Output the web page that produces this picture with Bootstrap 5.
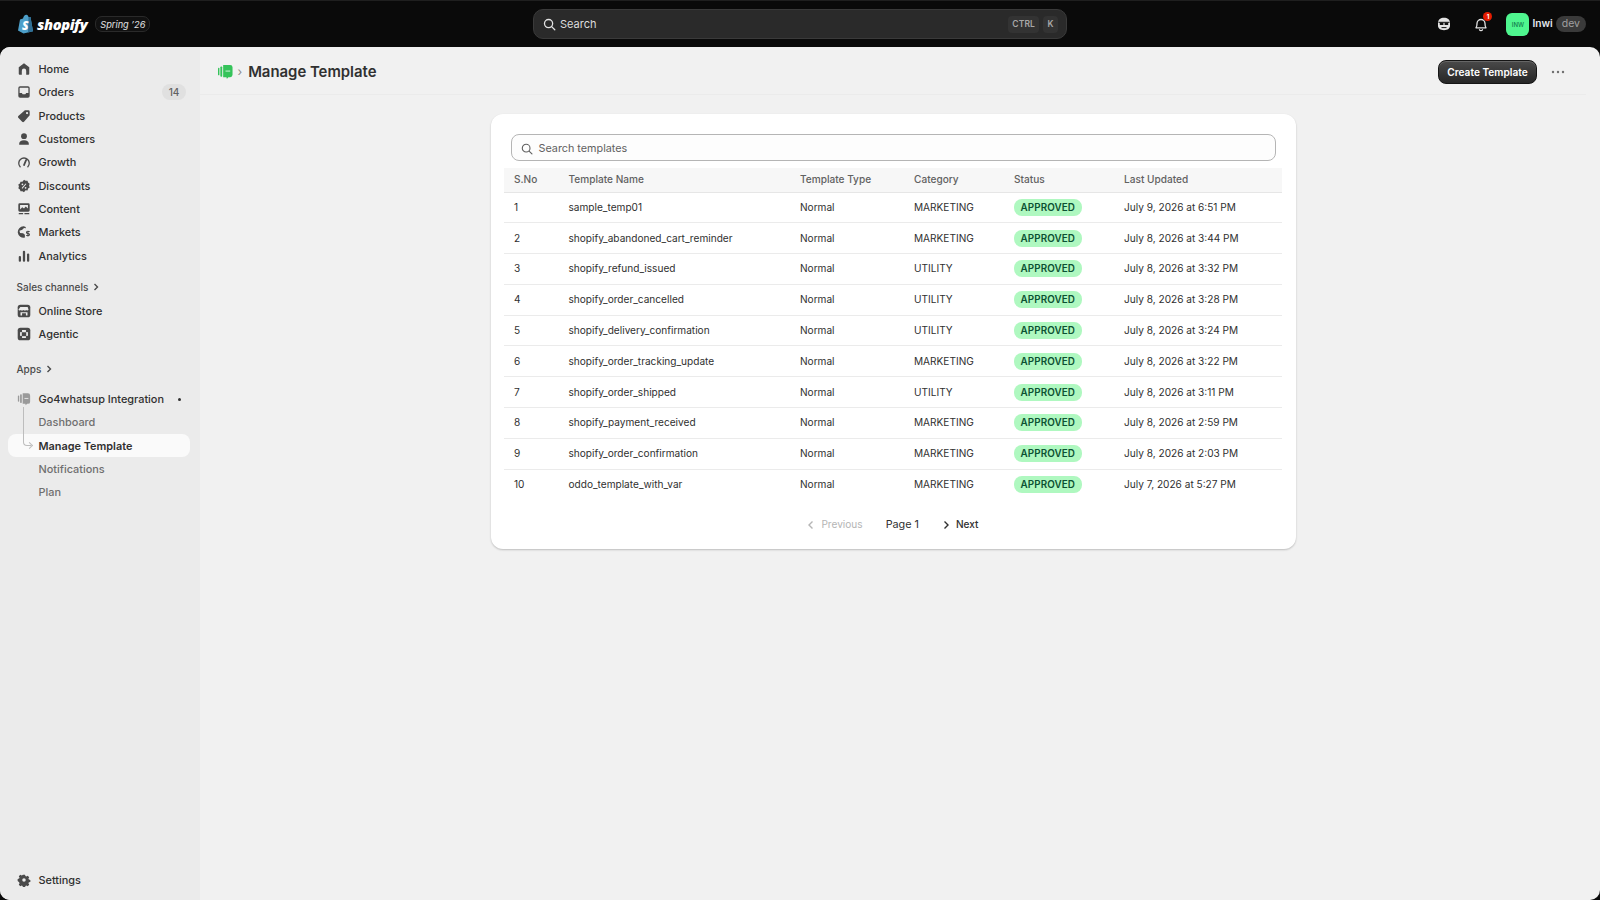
<!doctype html>
<html lang="en">
<head>
<meta charset="utf-8">
<title>Manage Template</title>
<link href="https://cdn.jsdelivr.net/npm/bootstrap@5.3.0/dist/css/bootstrap.min.css" rel="stylesheet">
<style>
html,body{height:100%}
body{background:#0a0a0a;font-family:Inter,"Liberation Sans",sans-serif;font-size:12px;overflow:hidden;color:#303030}
.shell{height:900px}
.topbar{height:47px;flex:none;border-top:1px solid #1f1f1f;padding:0 14px 0 17px}
.brand-side{width:516px}
.brand-word{font-family:"Open Sans",sans-serif;font-weight:800;font-style:italic;font-size:14.7px;letter-spacing:-.4px;color:#fff;margin-left:3px;line-height:1}
.spring{font-size:9.200px;font-style:italic;color:#e3e3e3;border:1px solid #2a2a2a;border-radius:7px;padding:1px 4px;margin-left:8px;height:16px;line-height:13px;background:#111}
.topsearch{width:534px;height:30px;background:#2a2a2a;border:1px solid #3a3a3a;border-radius:10px;padding:0 8px 0 9px;color:#dcdcdc;font-size:11px}
.keycap{background:#333;border-radius:4px;height:17px;padding:0 3px;font-size:8.500px;font-weight:600;color:#a8a8a8;line-height:17px;letter-spacing:.1px;min-width:15px;text-align:center}
.top-right{margin-left:auto}
.bell-wrap{margin-left:23px}
.notif-dot{top:-5px;right:-4px;width:9px;height:9px;border-radius:50%;background:#e51c00;color:#fff;font-size:6px;font-weight:700;line-height:9px;text-align:center}
.avatar-box{width:23px;height:23px;margin-left:18px;border-radius:6px;background:#4ff68f;color:#0f7a4a;font-size:6px;font-weight:500;line-height:23px;text-align:center}
.user-name{color:#e3e8ee;font-size:10.200px;font-weight:600;margin-left:3px}
.dev-pill{background:#3a3a3a;color:#a0a0a0;border-radius:8px;height:16px;line-height:16px;padding:0 6px;font-size:10.500px;margin-left:3px}
.frame{flex:1;min-height:0;border-radius:10px;overflow:hidden;background:#f1f1f1}
.side-nav{width:200px;flex:none;background:#ebebeb;padding:10.500px 10px 8px 8px}
.nav-row{height:23.33px;display:flex;align-items:center;padding-left:8.500px;color:#303030;font-weight:500;font-size:10.900px;text-decoration:none;border-radius:8px}
.nav-row svg{width:14px;height:14px;flex:none;margin-right:8px;fill:#4a4a4a}
.nav-sub{padding-left:30.500px;color:#6f6f6f}
.nav-on{background:#fafafa;color:#303030;font-weight:600}
.count-pill{margin-left:auto;margin-right:4px;background:#e0e0e0;border-radius:8px;width:24px;height:16px;line-height:16px;text-align:center;font-size:10px;color:#616161}
.nav-head{height:18px;display:flex;align-items:center;padding-left:8.500px;font-size:10px;font-weight:500;color:#4a4a4a}
.nav-head svg{width:8px;height:8px;margin-left:4px;stroke:#4a4a4a;fill:none;stroke-width:1.4}
.sec-sales{margin-top:10.800px;margin-bottom:3px}
.sec-apps{margin-top:14.500px;margin-bottom:9px}
.tree-line{left:14.5px;top:-27px;width:8px;height:39px;border-left:1px solid #bdbdbd;border-bottom:1px solid #bdbdbd;border-bottom-left-radius:4px}
.tree-line::after{content:"";position:absolute;right:-1px;bottom:-3px;width:5px;height:5px;border-top:1px solid #bdbdbd;border-right:1px solid #bdbdbd;transform:rotate(45deg)}
.mini-dot{width:3px;height:3px;border-radius:50%;background:#303030;margin-left:auto;margin-right:9px}
.main-pane{padding-right:14px;min-width:0}
.page-head{height:48px;border-bottom:1px solid #ebebeb;padding:3px 21px 0 18px}
.page-title{font-size:14.900px;font-weight:600;color:#303030;margin:0;padding-top:2px}
.crumb{color:#8a8a8a;font-size:12px;margin:0 6px 0 4.500px}
.create-btn{background:linear-gradient(#4a4a4a,#262626);color:#fff;border:1px solid #151515;border-radius:8px;height:24px;width:99px;padding:0;font-size:10.150px;font-weight:600;line-height:1;box-shadow:inset 0 1px 0 #666}
.create-btn:hover{background:#303030;color:#fff}
.dots-btn{margin-left:14px;width:14px;height:4px}
.tpl-card{width:805px;margin:19px auto 0;border-radius:12px;background:#fff;border:0;box-shadow:0 1px 2px rgba(0,0,0,.22);padding:20px 13px 12px}
.tpl-search{margin:0 7px 7px;height:27px;border:1px solid #b5b5b5;border-radius:8px;padding:3px 9px 0;color:#616161;font-size:10.800px;background:#fdfdfd}
.search-glyph{margin-right:6px}
.tpl-table{table-layout:fixed;width:778px;margin:0;font-size:10.100px;color:#303030}
.tpl-table th{background:#f7f7f7;font-weight:500;color:#616161;height:24px;padding:0 10px 1px 10.500px;border-bottom:1px solid #e6e6e6;vertical-align:middle}
.tpl-table td{height:30.8px;padding:0 10px 0 10.500px;vertical-align:middle;border-bottom:1px solid #ebebeb;color:#303030;background:transparent}
.tpl-table tr:last-child td{border-bottom:0}
.col-a{width:54.5px}.col-b{width:231.5px}.col-c{width:114px}.col-d{width:100px}.col-e{width:110px}.col-f{width:168px}
.tpl-table td:nth-child(5){padding-left:10px}
.ok-pill{display:inline-block;background:#aff8c0;color:#0c5132;font-weight:600;border-radius:8px;height:17px;line-height:17px;padding:0 7px;font-size:9.850px;letter-spacing:.1px}
.pager{margin-top:13px;height:24px;font-size:10.100px}
.pg-off{color:#b5b5b5}
.pg-label{font-size:10.800px;margin:0 23px 0 23px;color:#303030}
.pg-on{color:#303030;font-weight:500}
.pg-chev{width:8px;height:10px;fill:none;stroke-width:1.4;margin-right:6px}
</style>
</head>
<body>
<div class="shell d-flex flex-column">
  <header class="topbar d-flex align-items-center">
    <div class="brand-side d-flex align-items-center">
      <svg width="17" height="20" viewBox="0 0 17 20"><path d="M1 16.5 3 5.500l3-1C6.500 2 8 .6 9.500.8 10.600 1 11.300 2 11.500 3l2 .1 2.500 14.200L6.500 19.500z" fill="#4d9fc9"/><path d="M11.500 3 13.500 3.100 16 17.300 11 18.600z" fill="#2f6f96"/><text x="5" y="15.500" font-family="Open Sans,sans-serif" font-size="12" font-weight="800" font-style="italic" fill="#fff">S</text></svg>
      <span class="brand-word">shopify</span>
      <span class="spring">Spring ’26</span>
    </div>
    <div class="topsearch d-flex align-items-center">
      <svg width="13" height="13" viewBox="0 0 14 14" class="me-1" fill="none" stroke="#e3e3e3" stroke-width="1.4"><circle cx="6" cy="6" r="4.400"/><path d="m9.300 9.300 3.400 3.400" stroke-linecap="round"/></svg>
      <span>Search</span>
      <span class="ms-auto d-flex gap-1"><span class="keycap px-1">CTRL</span><span class="keycap">K</span></span>
    </div>
    <div class="top-right d-flex align-items-center">
      <svg width="14" height="14" viewBox="0 0 14 14"><path d="M7 .8c3.400 0 6 1.800 6 5.400v2.600c0 2.800-2.400 4.400-6 4.400s-6-1.600-6-4.400V6.200C1 2.600 3.600.8 7 .8z" fill="#e3e3e3"/><path d="M1.500 4.800h11v1H1.500z" fill="#111"/><path d="M2.800 5.500h3.600v2.500H2.800zM7.600 5.500h3.600v2.500H7.600z" fill="#111"/><path d="M4.500 10.600h5" stroke="#111" stroke-width="1"/></svg>
      <span class="bell-wrap position-relative d-inline-flex">
        <svg width="14" height="15" viewBox="0 0 14 15" fill="none" stroke="#e3e3e3" stroke-width="1.300"><path d="M2 10.800c1-1 1-2.300 1-4.300a4 4 0 0 1 8 0c0 2 0 3.300 1 4.300z" stroke-linejoin="round"/><path d="M5.500 12.800a1.700 1.700 0 0 0 3 0" stroke-linecap="round"/></svg>
        <span class="notif-dot position-absolute">1</span>
      </span>
      <span class="avatar-box">INW</span>
      <span class="user-name">Inwi</span>
      <span class="dev-pill">dev</span>
    </div>
  </header>
  <div class="frame d-flex">
    <nav class="side-nav d-flex flex-column">
      <a class="nav-row" href="#"><svg viewBox="0 0 16 16"><path d="M8 1.500 14 6v7.500a1 1 0 0 1-1 1h-2.500V10a2.500 2.500 0 0 0-5 0v4.500H3a1 1 0 0 1-1-1V6z"/></svg>Home</a>
      <a class="nav-row" href="#"><svg viewBox="0 0 16 16"><path fill-rule="evenodd" d="M3.500 1.500h9a2 2 0 0 1 2 2v9a2 2 0 0 1-2 2h-9a2 2 0 0 1-2-2v-9a2 2 0 0 1 2-2zm-.5 2V9h2.500l1 1.500h3l1-1.500H13V3.500a.5.500 0 0 0-.5-.5h-9a.5.500 0 0 0-.5.500z"/></svg>Orders<span class="count-pill">14</span></a>
      <a class="nav-row" href="#"><svg viewBox="0 0 16 16"><path fill-rule="evenodd" d="M9 1.500h4a1.500 1.500 0 0 1 1.500 1.500v4L8 14.500a1.500 1.500 0 0 1-2.100 0L1.500 10a1.500 1.500 0 0 1 0-2.100zM11.500 6a1.300 1.300 0 1 0 0-2.600 1.300 1.300 0 0 0 0 2.600z"/></svg>Products</a>
      <a class="nav-row" href="#"><svg viewBox="0 0 16 16"><circle cx="8" cy="4.800" r="3.300"/><path d="M2.500 14.500v-1c0-2.500 2-4 5.500-4s5.500 1.500 5.500 4v1z"/></svg>Customers</a>
      <a class="nav-row" href="#"><svg viewBox="0 0 16 16"><path d="M3.600 13.500A6 6 0 1 1 12.400 13.500" fill="none" stroke="#4a4a4a" stroke-width="1.500" stroke-linecap="round"/><path d="M10.500 5.500 8 11.500" fill="none" stroke="#4a4a4a" stroke-width="2" stroke-linecap="round"/></svg>Growth</a>
      <a class="nav-row" href="#"><svg viewBox="0 0 16 16"><path fill-rule="evenodd" d="M8 .8l1.800 1.300 2.200-.1.700 2.100 1.800 1.300-.7 2.100.7 2.100-1.800 1.300-.7 2.100-2.200-.1L8 15.200l-1.800-1.300-2.200.1-.7-2.100-1.800-1.300.7-2.100-.7-2.100 1.800-1.300.7-2.100 2.200.1zM6.200 5a1 1 0 1 0 0 2 1 1 0 0 0 0-2zm3.600 4a1 1 0 1 0 0 2 1 1 0 0 0 0-2zm.1-4L5.300 10.200l.8.800 4.600-5.200z"/></svg>Discounts</a>
      <a class="nav-row" href="#"><svg viewBox="0 0 16 16"><path fill-rule="evenodd" d="M3 1.500h10A1.500 1.500 0 0 1 14.500 3v6.500A1.500 1.500 0 0 1 13 11H3a1.500 1.500 0 0 1-1.500-1.500V3A1.500 1.500 0 0 1 3 1.500zM3.500 8.500 6 6l2 1.500L10 5l2.500 2.500V3.500h-9z"/><path d="M2 12.500h5v1.600H2zM8.500 12.500H14v1.600H8.500z"/></svg>Content</a>
      <a class="nav-row" href="#"><svg viewBox="0 0 16 16"><path d="M7.500 1.500A6.500 6.500 0 1 0 9 14.300V11L7 9.500 3.500 9 2.800 6.500 6 5.500 8 3.500l2.500.3C10 2.500 9 1.500 7.500 1.500z"/><path d="M14.500 7.500h-2.600a1 1 0 0 0 0 2.200h1.200a1 1 0 0 1 0 2.300h-2.600M12.500 6.500v6.500" fill="none" stroke="#4a4a4a" stroke-width="1.200"/></svg>Markets</a>
      <a class="nav-row" href="#"><svg viewBox="0 0 16 16"><rect x="2" y="8" width="2.600" height="6.500" rx="1.200"/><rect x="6.700" y="2" width="2.600" height="12.500" rx="1.200"/><rect x="11.400" y="5" width="2.600" height="9.500" rx="1.200"/></svg>Analytics</a>

      <div class="nav-head sec-sales">Sales channels<svg viewBox="0 0 8 8"><path d="m2.500 1 3 3-3 3"/></svg></div>
      <a class="nav-row" href="#"><svg viewBox="0 0 16 16"><rect x=".8" y=".8" width="14.400" height="14.400" rx="3"/><path d="M3.800 3.500h8.400l1 3.200c-.8 1-1.800 1-2.600.1-.8.9-2.400.9-3.200 0-.8.9-2.400.9-3.200 0-.8.9-1.800.9-2.600-.1zM4 9.500V13h1.800v-2.300h4.400V13H12V9.500" fill="#ebebeb"/></svg>Online Store</a>
      <a class="nav-row" href="#"><svg viewBox="0 0 16 16"><rect x=".8" y=".8" width="14.400" height="14.400" rx="3"/><rect x="3.500" y="3.500" width="9" height="9" rx="2" fill="#ebebeb"/><path d="M5.500 6h5v4.500h-5z"/><circle cx="4.500" cy="4.500" r="1.400"/><circle cx="11.500" cy="4.500" r="1.400"/><circle cx="4.500" cy="11.500" r="1.400"/><circle cx="11.500" cy="11.500" r="1.400"/></svg>Agentic</a>

      <div class="nav-head sec-apps">Apps<svg viewBox="0 0 8 8"><path d="m2.500 1 3 3-3 3"/></svg></div>
      <a class="nav-row" href="#"><svg viewBox="0 0 16 16"><rect x="1" y="4" width="1.500" height="7" rx=".7" fill="#9a9a9a"/><rect x="3.500" y="2.500" width="2" height="10" rx=".8" fill="#9a9a9a"/><path d="M6.500 1.500h6a2.500 2.500 0 0 1 2.500 2.500v7a2.500 2.500 0 0 1-2.500 2.500h-1L10 15l-.5-1.500h-3z" fill="#9a9a9a"/><rect x="8.500" y="6.800" width="4.500" height="1" fill="#ebebeb"/></svg>Go4whatsup Integration<span class="mini-dot"></span></a>
      <a class="nav-row nav-sub" href="#">Dashboard</a>
      <a class="nav-row nav-sub nav-on position-relative" href="#"><span class="tree-line position-absolute"></span>Manage Template</a>
      <a class="nav-row nav-sub" href="#">Notifications</a>
      <a class="nav-row nav-sub" href="#">Plan</a>

      <a class="nav-row mt-auto" href="#"><svg viewBox="0 0 16 16"><path fill-rule="evenodd" d="M6.600 1h2.800l.4 1.900 1.300.6 1.700-1 2 2-1 1.700.6 1.300 1.900.4v2.800l-1.900.4-.6 1.300 1 1.700-2 2-1.700-1-1.300.6-.4 1.900H6.600l-.4-1.900-1.300-.6-1.700 1-2-2 1-1.700-.6-1.300L-.3 9.400V6.600l1.900-.4.6-1.300-1-1.700 2-2 1.700 1 1.300-.6zM8 5.700a2.300 2.300 0 1 0 0 4.600 2.300 2.300 0 0 0 0-4.600z" transform="translate(1 1) scale(.875)"/></svg>Settings</a>
    </nav>
    <main class="main-pane flex-grow-1">
      <div class="page-head d-flex align-items-center">
        <svg width="15" height="16" viewBox="0 0 16 17" fill="#35c35a"><rect x="0" y="4" width="1.500" height="8" rx=".7"/><rect x="2.500" y="2.500" width="2" height="11" rx=".8"/><path d="M5.500 1h7.500A2.500 2.500 0 0 1 15.500 3.500v8A2.500 2.500 0 0 1 13 14h-2l-1.500 2L9 14H5.500z"/><rect x="8" y="7" width="5" height="1" fill="#d8f5df"/></svg>
        <span class="crumb">›</span>
        <h1 class="page-title">Manage Template</h1>
        <div class="ms-auto d-flex align-items-center">
          <button type="button" class="btn create-btn">Create Template</button>
          <svg class="dots-btn" viewBox="0 0 14 4" fill="#6f6f6f"><circle cx="2" cy="2" r="1.200"/><circle cx="7" cy="2" r="1.200"/><circle cx="12" cy="2" r="1.200"/></svg>
        </div>
      </div>
      <div class="card tpl-card">
        <div class="tpl-search d-flex align-items-center">
          <svg width="12" height="12" viewBox="0 0 14 14" class="search-glyph" fill="none" stroke="#616161" stroke-width="1.300"><circle cx="6" cy="6" r="4.500"/><path d="m9.400 9.400 3.400 3.400" stroke-linecap="round"/></svg>
          <span>Search templates</span>
        </div>
        <table class="table tpl-table">
          <colgroup><col class="col-a"><col class="col-b"><col class="col-c"><col class="col-d"><col class="col-e"><col class="col-f"></colgroup>
          <thead><tr><th>S.No</th><th>Template Name</th><th>Template Type</th><th>Category</th><th>Status</th><th>Last Updated</th></tr></thead>
          <tbody>
            <tr><td>1</td><td>sample_temp01</td><td>Normal</td><td>MARKETING</td><td><span class="ok-pill">APPROVED</span></td><td>July 9, 2026 at 6:51 PM</td></tr>
            <tr><td>2</td><td>shopify_abandoned_cart_reminder</td><td>Normal</td><td>MARKETING</td><td><span class="ok-pill">APPROVED</span></td><td>July 8, 2026 at 3:44 PM</td></tr>
            <tr><td>3</td><td>shopify_refund_issued</td><td>Normal</td><td>UTILITY</td><td><span class="ok-pill">APPROVED</span></td><td>July 8, 2026 at 3:32 PM</td></tr>
            <tr><td>4</td><td>shopify_order_cancelled</td><td>Normal</td><td>UTILITY</td><td><span class="ok-pill">APPROVED</span></td><td>July 8, 2026 at 3:28 PM</td></tr>
            <tr><td>5</td><td>shopify_delivery_confirmation</td><td>Normal</td><td>UTILITY</td><td><span class="ok-pill">APPROVED</span></td><td>July 8, 2026 at 3:24 PM</td></tr>
            <tr><td>6</td><td>shopify_order_tracking_update</td><td>Normal</td><td>MARKETING</td><td><span class="ok-pill">APPROVED</span></td><td>July 8, 2026 at 3:22 PM</td></tr>
            <tr><td>7</td><td>shopify_order_shipped</td><td>Normal</td><td>UTILITY</td><td><span class="ok-pill">APPROVED</span></td><td>July 8, 2026 at 3:11 PM</td></tr>
            <tr><td>8</td><td>shopify_payment_received</td><td>Normal</td><td>MARKETING</td><td><span class="ok-pill">APPROVED</span></td><td>July 8, 2026 at 2:59 PM</td></tr>
            <tr><td>9</td><td>shopify_order_confirmation</td><td>Normal</td><td>MARKETING</td><td><span class="ok-pill">APPROVED</span></td><td>July 8, 2026 at 2:03 PM</td></tr>
            <tr><td>10</td><td>oddo_template_with_var</td><td>Normal</td><td>MARKETING</td><td><span class="ok-pill">APPROVED</span></td><td>July 7, 2026 at 5:27 PM</td></tr>
          </tbody>
        </table>
        <div class="pager d-flex align-items-center justify-content-center">
          <span class="pg-off d-flex align-items-center"><svg class="pg-chev" viewBox="0 0 8 10" stroke="#b5b5b5"><path d="M5.500 1.500 2 5l3.500 3.500"/></svg>Previous</span>
          <span class="pg-label">Page 1</span>
          <span class="pg-on d-flex align-items-center"><svg class="pg-chev" viewBox="0 0 8 10" stroke="#303030"><path d="M2.500 1.500 6 5 2.500 8.500"/></svg>Next</span>
        </div>
      </div>
    </main>
  </div>
</div>
<script src="https://cdn.jsdelivr.net/npm/bootstrap@5.3.0/dist/js/bootstrap.bundle.min.js"></script>
</body>
</html>
